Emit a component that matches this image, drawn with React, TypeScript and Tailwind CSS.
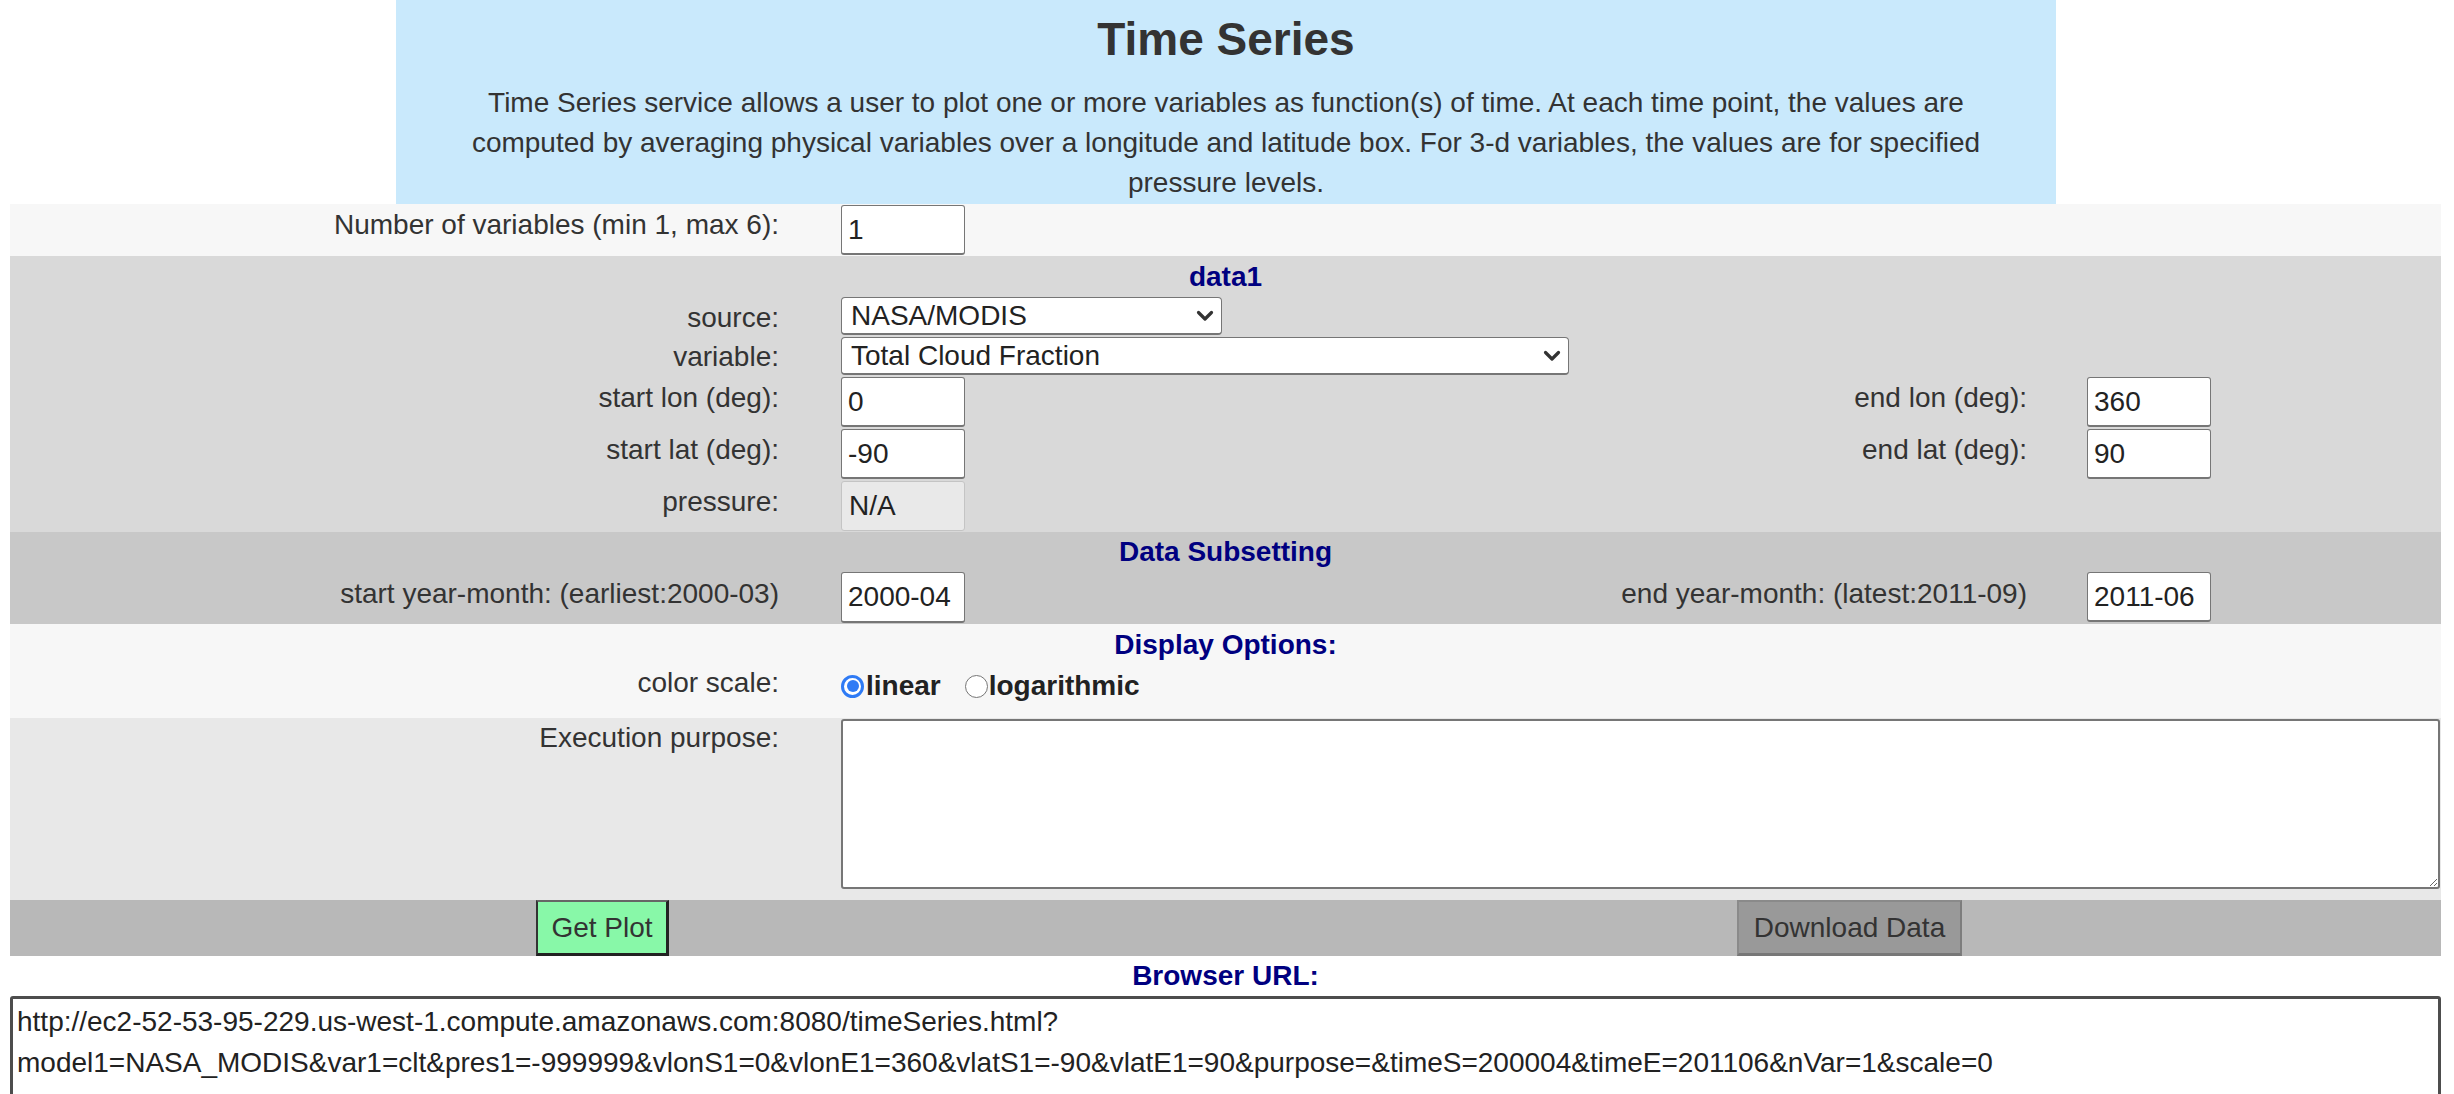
import React from "react";

function TextBox({ value, w }: { value: string; w: string }) {
  return (
    <div
      className={`${w} h-[50px] bg-white border border-[#767676] border-b-2 rounded-[3px] flex items-center pl-[6px] text-[#222]`}
    >
      {value}
    </div>
  );
}

function Select({ value, w }: { value: string; w: string }) {
  return (
    <div
      className={`${w} h-[38px] bg-white border border-[#767676] border-b-2 rounded-[4px] flex items-center justify-between pl-[9px] pr-[7px] text-[#222]`}
    >
      <span>{value}</span>
      <svg width="18" height="12" viewBox="0 0 18 12">
        <path d="M2.5 2.5 L9 9 L15.5 2.5" fill="none" stroke="#333" strokeWidth="3.2" strokeLinecap="round" strokeLinejoin="round" />
      </svg>
    </div>
  );
}

function Head({ children, h }: { children: React.ReactNode; h: string }) {
  return (
    <div className={`${h} flex items-center justify-center font-bold text-[#000080]`}>{children}</div>
  );
}

export default function App() {
  const url =
    "http://ec2-52-53-95-229.us-west-1.compute.amazonaws.com:8080/timeSeries.html?\nmodel1=NASA_MODIS&var1=clt&pres1=-999999&vlonS1=0&vlonE1=360&vlatS1=-90&vlatE1=90&purpose=&timeS=200004&timeE=201106&nVar=1&scale=0";
  return (
    <div className="h-[1094px] overflow-hidden bg-white font-['Liberation_Sans',Arial,sans-serif] text-[28px] leading-[32px] text-[#333]">
      {/* header */}
      <div className="ml-[396px] w-[1660px] h-[204px] bg-[#c9e9fc] px-[45px] text-center">
        <h1 className="pt-[11px] text-[46px] leading-[56px] font-bold text-[#333]">Time Series</h1>
        <p className="mt-[16px] leading-[40px] text-[#333]">
          Time Series service allows a user to plot one or more variables as function(s) of time. At each time point, the values are computed by averaging physical variables over a longitude and latitude box. For 3-d variables, the values are for specified pressure levels.
        </p>
      </div>

      <div className="mx-[10px] w-[2431px]">
        {/* number of variables */}
        <div className="bg-[#f7f7f7] h-[52px] flex items-start pt-[1px]">
          <div className="w-[769px] text-right pt-[4px]">Number of variables (min 1, max 6):</div>
          <div className="ml-[62px]">
            <TextBox value="1" w="w-[124px]" />
          </div>
        </div>

        {/* data1 */}
        <div className="bg-[#d9d9d9] pb-[1px]">
          <Head h="h-[41px]">data1</Head>
          <div className="flex flex-col gap-[2px]">
            <div className="flex h-[38px] items-center">
              <div className="w-[769px] text-right pt-[3px]">source:</div>
              <div className="ml-[62px]">
                <Select value="NASA/MODIS" w="w-[381px]" />
              </div>
            </div>
            <div className="flex h-[38px] items-center">
              <div className="w-[769px] text-right pt-[2px]">variable:</div>
              <div className="ml-[62px]">
                <Select value="Total Cloud Fraction" w="w-[728px]" />
              </div>
            </div>
            <div className="flex h-[50px] items-center">
              <div className="w-[769px] text-right pb-[8px]">start lon (deg):</div>
              <div className="ml-[62px] w-[755px]">
                <TextBox value="0" w="w-[124px]" />
              </div>
              <div className="w-[431px] text-right pb-[8px]">end lon (deg):</div>
              <div className="ml-[60px]">
                <TextBox value="360" w="w-[124px]" />
              </div>
            </div>
            <div className="flex h-[50px] items-center">
              <div className="w-[769px] text-right pb-[8px]">start lat (deg):</div>
              <div className="ml-[62px] w-[755px]">
                <TextBox value="-90" w="w-[124px]" />
              </div>
              <div className="w-[431px] text-right pb-[8px]">end lat (deg):</div>
              <div className="ml-[60px]">
                <TextBox value="90" w="w-[124px]" />
              </div>
            </div>
            <div className="flex h-[50px] items-center">
              <div className="w-[769px] text-right pb-[8px]">pressure:</div>
              <div className="ml-[62px]">
                <div className="w-[124px] h-[50px] bg-[#e9e9e9] border border-[#c4c4c4] rounded-[3px] flex items-center pl-[7px] text-[#222]">
                  N/A
                </div>
              </div>
            </div>
          </div>
        </div>

        {/* data subsetting */}
        <div className="bg-[#c8c8c8] h-[92px]">
          <Head h="h-[40px]">Data Subsetting</Head>
          <div className="flex h-[52px] items-start">
            <div className="w-[769px] text-right pt-[6px]">start year-month: (earliest:2000-03)</div>
            <div className="ml-[62px] w-[755px]">
              <TextBox value="2000-04" w="w-[124px] h-[51px]" />
            </div>
            <div className="w-[431px] text-right pt-[6px]">end year-month: (latest:2011-09)</div>
            <div className="ml-[60px]">
              <TextBox value="2011-06" w="w-[124px]" />
            </div>
          </div>
        </div>

        {/* display options */}
        <div className="bg-[#f7f7f7] h-[94px]">
          <Head h="h-[42px]">Display Options:</Head>
          <div className="flex items-start pt-[1px]">
            <div className="w-[769px] text-right">color scale:</div>
            <div className="ml-[62px] flex items-center pt-[3px] font-bold text-[#222]">
              <span className="w-[23px] h-[23px] rounded-full border-[3px] border-[#2f7bf5] bg-white flex items-center justify-center mr-[2px]">
                <span className="w-[12px] h-[12px] rounded-full bg-[#2f7bf5]" />
              </span>
              <span>linear</span>
              <span className="w-[23px] h-[23px] rounded-full border-[1.5px] border-[#767676] bg-white ml-[24px] mr-[1px]" />
              <span>logarithmic</span>
            </div>
          </div>
        </div>

        {/* execution purpose */}
        <div className="bg-[#e8e8e8] h-[182px] flex items-start">
          <div className="w-[769px] text-right pt-[4px]">Execution purpose:</div>
          <div className="ml-[62px] pt-[1px]">
            <textarea className="block w-[1599px] h-[170px] bg-white border-2 border-[#767676] rounded-[3px] outline-none" />
          </div>
        </div>

        {/* buttons */}
        <div className="bg-[#b8b8b8] h-[56px] flex">
          <button className="ml-[526px] w-[133px] h-[56px] bg-[#88f8a8] border-l-2 border-t-2 border-r-[3px] border-b-[3px] border-l-[#333] border-t-[#666] border-r-[#222] border-b-[#222] text-[#333] font-['Liberation_Sans',Arial,sans-serif] text-[28px]">
            Get Plot
          </button>
          <button className="ml-[1068px] w-[225px] h-[56px] bg-[#999999] border-2 border-t-[#8a8a8a] border-l-[#8a8a8a] border-r-[#7d7d7d] border-b-[3px] border-b-[#777] text-[#333] font-['Liberation_Sans',Arial,sans-serif] text-[28px]">
            Download Data
          </button>
        </div>

        {/* browser url */}
        <Head h="h-[40px]">Browser URL:</Head>
        <textarea
          readOnly
          value={url}
          className="block w-[2431px] h-[150px] bg-white border-[3px] border-[#4d4d4d] rounded-[3px] pl-[4px] pt-[2px] text-[28px] leading-[41px] text-[#222] resize-none outline-none font-['Liberation_Sans',Arial,sans-serif]"
        />
      </div>
    </div>
  );
}
